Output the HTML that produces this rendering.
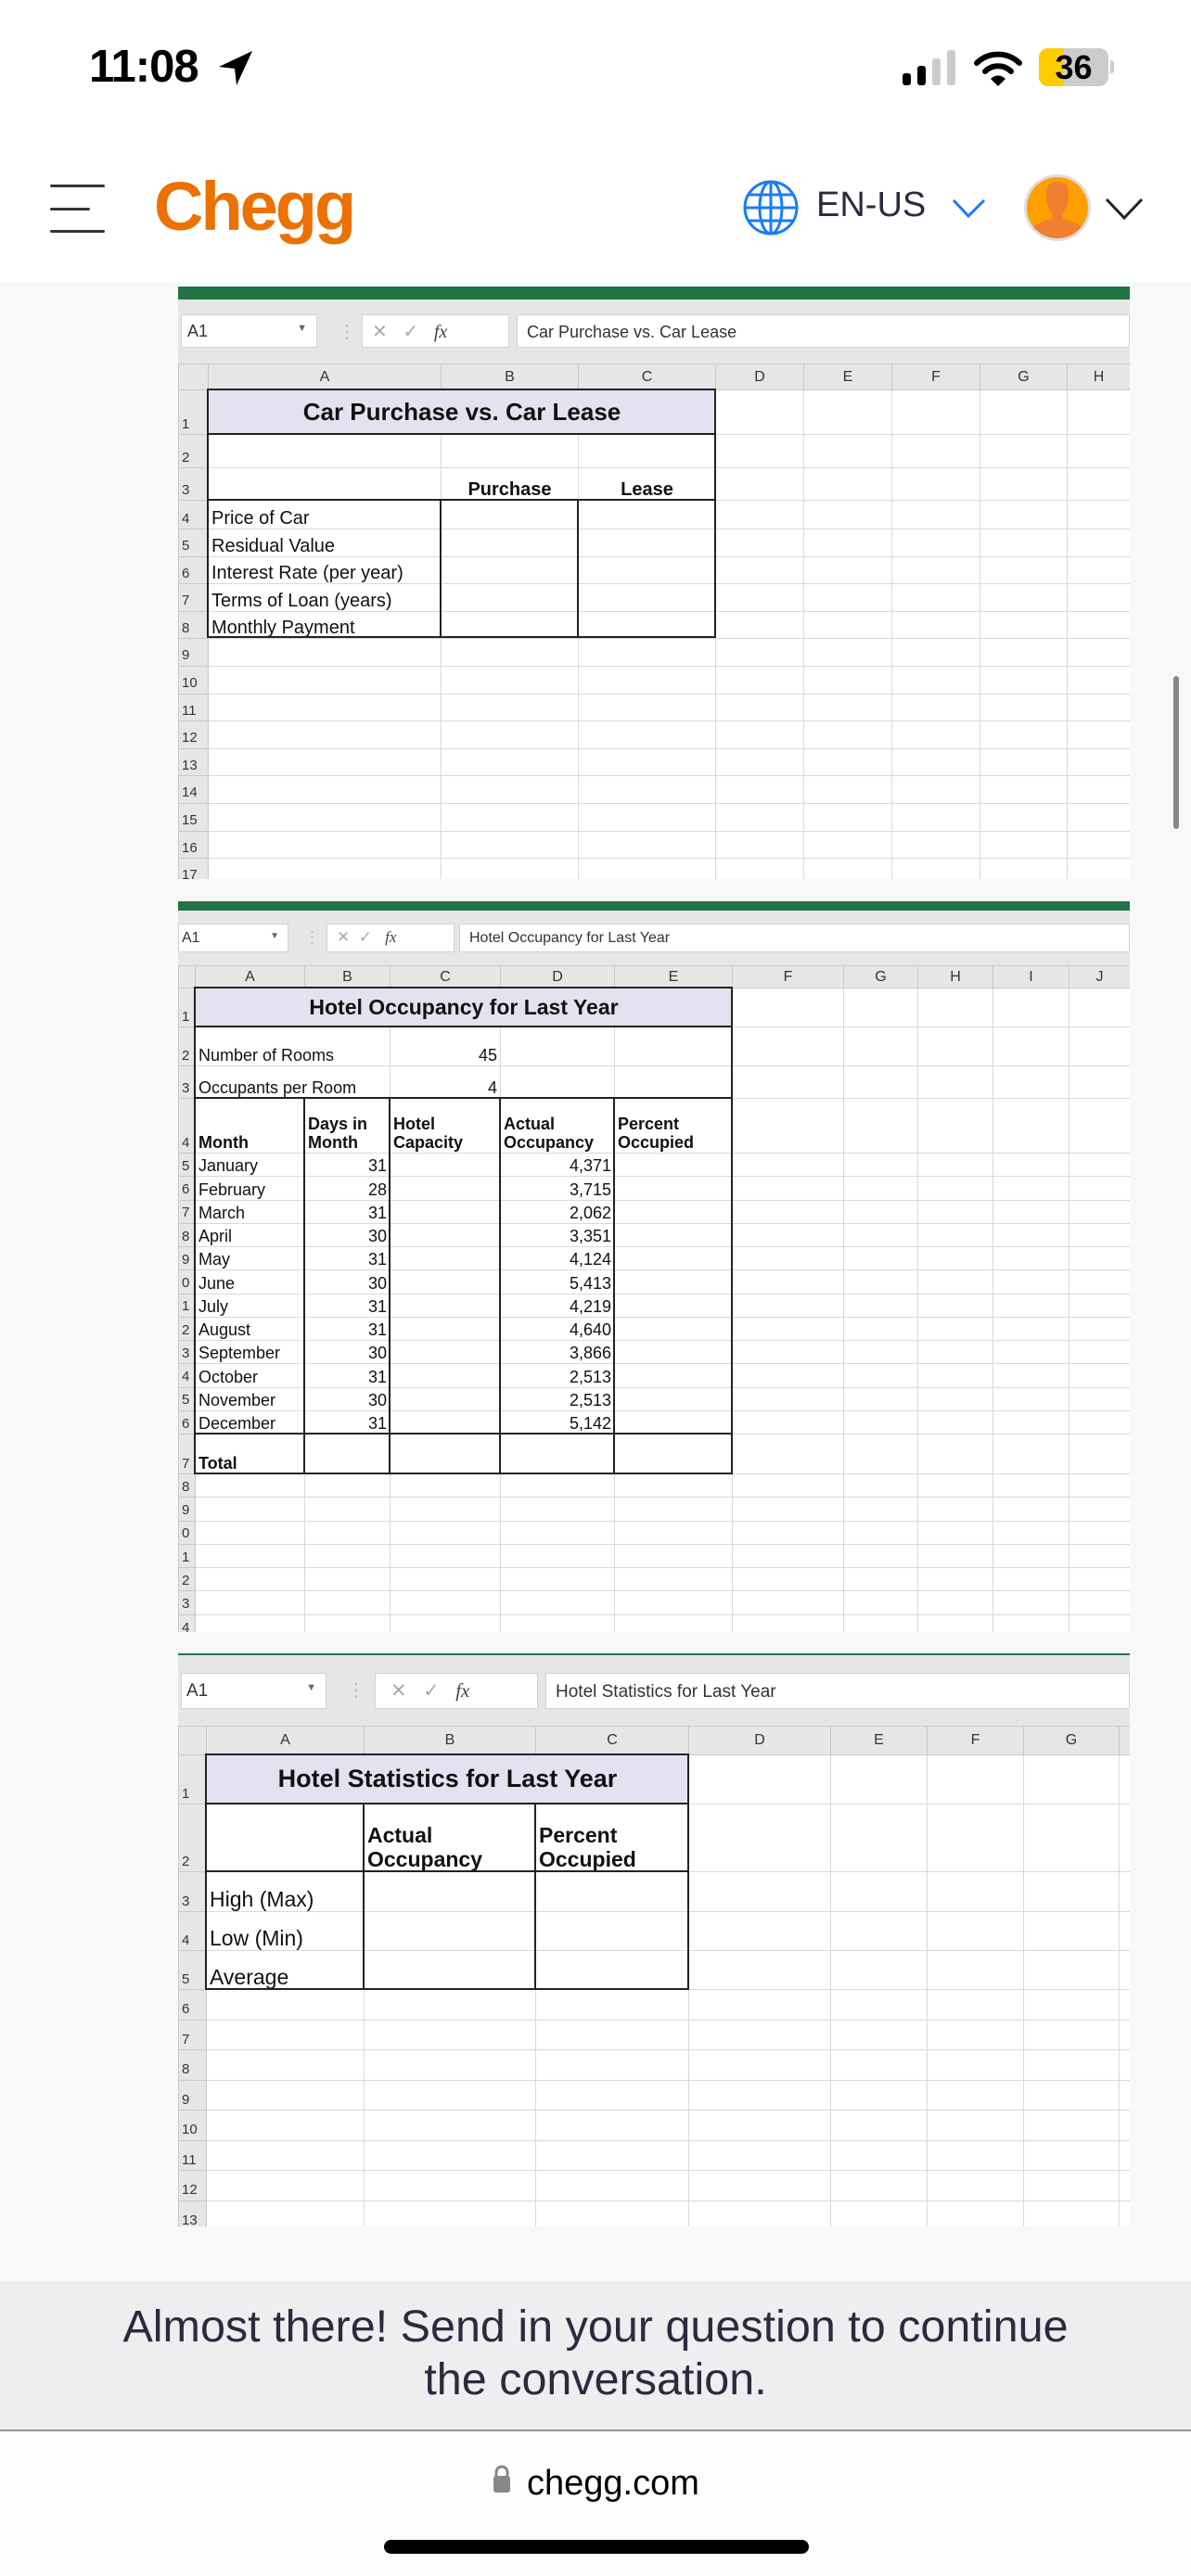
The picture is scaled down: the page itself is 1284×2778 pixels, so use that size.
<!DOCTYPE html>
<html><head><meta charset="utf-8">
<style>
*{margin:0;padding:0;box-sizing:border-box}
body{width:1284px;height:2778px;background:#f8f8f8;position:relative;overflow:hidden;font-family:"Liberation Sans",Arial,sans-serif;color:#111}
.abs{position:absolute}
.hdr{position:absolute;left:0;top:0;width:1284px;height:304px;background:#fff}
table{border-collapse:collapse;table-layout:fixed;position:absolute}
td{border:1px solid #d9d9d9;background:#fff;vertical-align:bottom;white-space:nowrap;overflow:hidden;padding:0 3px;line-height:1.1}
td.rn{background:#e6e6e6;color:#333;border-color:#c8c8c8;font-size:15px;padding:0 0 2px 3px}
tr.ch td{background:#e6e6e6;color:#333;text-align:center;vertical-align:middle;font-size:16px;border-color:#c8c8c8}
.r{text-align:right}.b{font-weight:bold}.c{text-align:center}
.lav{background:#e4e2f0!important}
.tb{position:absolute;background:#e6e6e6}
.box{position:absolute;background:#fff;border:1px solid #d2d2d2;color:#333}
.thk{position:absolute;border:2px solid #222}
.hl{position:absolute;height:2px;background:#222}
.vl{position:absolute;width:2px;background:#222}
</style></head><body>

<div class="hdr"></div>
<!-- status bar -->
<div class="abs" style="left:96px;top:44px;font-size:49px;font-weight:600;letter-spacing:-1px;color:#000">11:08</div>
<svg class="abs" style="left:232px;top:52px" width="44" height="44" viewBox="0 0 44 44"><path d="M40 3 L4 20 L21 22 L23 40 Z" fill="#000"/></svg>
<div class="abs" style="left:973px;top:79px;width:9px;height:13px;background:#000;border-radius:3px"></div>
<div class="abs" style="left:989px;top:71px;width:9px;height:21px;background:#000;border-radius:3px"></div>
<div class="abs" style="left:1005px;top:63px;width:9px;height:29px;background:#ccc;border-radius:3px"></div>
<div class="abs" style="left:1021px;top:54px;width:9px;height:38px;background:#ccc;border-radius:3px"></div>
<svg class="abs" style="left:1049px;top:54px" width="54" height="40" viewBox="0 0 54 40"><path d="M4 14 A33 33 0 0 1 50 14" stroke="#000" stroke-width="6" fill="none" stroke-linecap="round"/><path d="M13 23 A20 20 0 0 1 41 23" stroke="#000" stroke-width="6" fill="none" stroke-linecap="round"/><path d="M19 31 L27 39 L35 31 A11 11 0 0 0 19 31Z" fill="#000"/></svg>
<div class="abs" style="left:1120px;top:52px;width:75px;height:41px;border-radius:10px;background:#ccc;overflow:hidden"><div style="width:27px;height:41px;background:#fc0"></div></div>
<div class="abs" style="left:1197px;top:65px;width:4px;height:14px;background:#ccc;border-radius:0 3px 3px 0"></div>
<div class="abs" style="left:1120px;top:52px;width:75px;height:41px;text-align:center;font-size:36px;font-weight:bold;line-height:41px;color:#000">36</div>

<!-- header -->
<div class="abs" style="left:54px;top:199px;width:59px;height:3px;background:#333;border-radius:2px"></div>
<div class="abs" style="left:54px;top:224px;width:43px;height:3px;background:#333;border-radius:2px"></div>
<div class="abs" style="left:54px;top:248px;width:59px;height:3px;background:#333;border-radius:2px"></div>
<div class="abs" style="left:166px;top:180px;font-size:74px;font-weight:bold;color:#eb7100;letter-spacing:-3px">Chegg</div>
<svg class="abs" style="left:801px;top:194px" width="60" height="60" viewBox="0 0 60 60"><g fill="none" stroke="#1a7cf5" stroke-width="3"><circle cx="30" cy="30" r="28"/><ellipse cx="30" cy="30" rx="12" ry="28"/><line x1="30" y1="2" x2="30" y2="58"/><line x1="2" y1="30" x2="58" y2="30"/><line x1="6" y1="16" x2="54" y2="16"/><line x1="6" y1="44" x2="54" y2="44"/></g></svg>
<div class="abs" style="left:880px;top:200px;font-size:38px;color:#2d2a3e">EN-US</div>
<svg class="abs" style="left:1025px;top:212px" width="40" height="26"><path d="M3 4 L19 21 L36 4" stroke="#1a7cf5" stroke-width="3" fill="none"/></svg>
<svg class="abs" style="left:1102px;top:186px" width="76" height="76" viewBox="0 0 76 76"><defs><clipPath id="cp"><circle cx="38" cy="38" r="33"/></clipPath></defs><circle cx="38" cy="38" r="36" fill="#ddd"/><circle cx="38" cy="38" r="33" fill="#ffa000"/><g clip-path="url(#cp)" fill="#f07f30"><path d="M26 22 Q26 10 38 10 Q50 10 50 22 Q50 38 44 44 L44 50 Q62 54 70 64 L70 80 L6 80 L6 64 Q14 54 32 50 L32 44 Q26 38 26 22Z"/></g></svg>
<svg class="abs" style="left:1190px;top:210px" width="44" height="30"><path d="M3 5 L22 25 L41 5" stroke="#222" stroke-width="3" fill="none"/></svg>
<div class="abs" style="left:1265px;top:729px;width:6px;height:165px;background:#888;border-radius:3px"></div>

<!-- SHEET 1 -->
<div class="abs" style="left:192px;top:309px;width:1026px;height:14px;background:#217346"></div>
<div class="tb" style="left:192px;top:323px;width:1026px;height:69px"></div>
<div class="box" style="left:195px;top:339px;width:147px;height:36px;font-size:18px;padding:7px 6px">A1<span style="position:absolute;right:10px;top:8px;font-size:11px;color:#666">▼</span></div>
<div class="abs" style="left:364px;top:345px;color:#bbb;font-size:20px">⋮</div>
<div class="box" style="left:390px;top:339px;width:159px;height:36px;font-size:20px;padding:5px 10px;color:#aaa">✕ &nbsp;&nbsp;✓ &nbsp;&nbsp;<i style="font-family:'Liberation Serif',serif;color:#444">fx</i></div>
<div class="box" style="left:557px;top:339px;width:661px;height:36px;font-size:18px;padding:8px 10px">Car Purchase vs. Car Lease</div>
<div class="abs" style="left:192px;top:392px;width:1026px;height:556px;overflow:hidden">
<table style="left:0;top:0;width:1026px;font-size:20px">
<colgroup><col style="width:32px"><col style="width:251px"><col style="width:148px"><col style="width:148px"><col style="width:95px"><col style="width:95px"><col style="width:95px"><col style="width:94px"><col style="width:68px"></colgroup>
<tr class="ch" style="height:28px"><td></td><td>A</td><td>B</td><td>C</td><td>D</td><td>E</td><td>F</td><td>G</td><td>H</td></tr>
<tr style="height:48px"><td class="rn">1</td><td colspan="3" class="lav b c" style="font-size:26px;vertical-align:middle">Car Purchase vs. Car Lease</td><td></td><td></td><td></td><td></td><td></td></tr>
<tr style="height:36px"><td class="rn">2</td><td></td><td></td><td></td><td></td><td></td><td></td><td></td><td></td></tr>
<tr style="height:35px"><td class="rn">3</td><td></td><td class="b c">Purchase</td><td class="b c">Lease</td><td></td><td></td><td></td><td></td><td></td></tr>
<tr style="height:31px"><td class="rn">4</td><td>Price of Car</td><td></td><td></td><td></td><td></td><td></td><td></td><td></td></tr>
<tr style="height:29.6px"><td class="rn">5</td><td>Residual Value</td><td></td><td></td><td></td><td></td><td></td><td></td><td></td></tr>
<tr style="height:29.6px"><td class="rn">6</td><td>Interest Rate (per year)</td><td></td><td></td><td></td><td></td><td></td><td></td><td></td></tr>
<tr style="height:29.6px"><td class="rn">7</td><td>Terms of Loan (years)</td><td></td><td></td><td></td><td></td><td></td><td></td><td></td></tr>
<tr style="height:29.6px"><td class="rn">8</td><td>Monthly Payment</td><td></td><td></td><td></td><td></td><td></td><td></td><td></td></tr>
<tr style="height:29.6px"><td class="rn">9</td><td></td><td></td><td></td><td></td><td></td><td></td><td></td><td></td></tr>
<tr style="height:29.6px"><td class="rn">10</td><td></td><td></td><td></td><td></td><td></td><td></td><td></td><td></td></tr>
<tr style="height:29.6px"><td class="rn">11</td><td></td><td></td><td></td><td></td><td></td><td></td><td></td><td></td></tr>
<tr style="height:29.6px"><td class="rn">12</td><td></td><td></td><td></td><td></td><td></td><td></td><td></td><td></td></tr>
<tr style="height:29.6px"><td class="rn">13</td><td></td><td></td><td></td><td></td><td></td><td></td><td></td><td></td></tr>
<tr style="height:29.6px"><td class="rn">14</td><td></td><td></td><td></td><td></td><td></td><td></td><td></td><td></td></tr>
<tr style="height:29.6px"><td class="rn">15</td><td></td><td></td><td></td><td></td><td></td><td></td><td></td><td></td></tr>
<tr style="height:29.6px"><td class="rn">16</td><td></td><td></td><td></td><td></td><td></td><td></td><td></td><td></td></tr>
<tr style="height:29.6px"><td class="rn">17</td><td></td><td></td><td></td><td></td><td></td><td></td><td></td><td></td></tr>
</table></div>
<div class="thk" style="left:223px;top:419px;width:549px;height:269px"></div>
<div class="hl" style="left:223px;top:467px;width:549px"></div>
<div class="hl" style="left:223px;top:538px;width:549px"></div>
<div class="vl" style="left:474px;top:538px;height:150px"></div>
<div class="vl" style="left:622px;top:538px;height:150px"></div>

<!-- SHEET 2 -->
<div class="abs" style="left:192px;top:972px;width:1026px;height:10px;background:#217346"></div>
<div class="tb" style="left:192px;top:982px;width:1026px;height:59px"></div>
<div class="box" style="left:192px;top:996px;width:119px;height:31px;font-size:16px;padding:6px 3px">A1<span style="position:absolute;right:9px;top:7px;font-size:10px;color:#666">▼</span></div>
<div class="abs" style="left:328px;top:1001px;color:#bbb;font-size:17px">⋮</div>
<div class="box" style="left:352px;top:996px;width:138px;height:31px;font-size:17px;padding:4px 10px;color:#aaa">✕ &nbsp;✓ &nbsp;&nbsp;<i style="font-family:'Liberation Serif',serif;color:#444">fx</i></div>
<div class="box" style="left:495px;top:996px;width:723px;height:31px;font-size:16px;padding:6px 10px">Hotel Occupancy for Last Year</div>
<div class="abs" style="left:192px;top:1041px;width:1026px;height:719px;overflow:hidden">
<table style="left:0;top:0;width:1026px;font-size:18px">
<colgroup><col style="width:18px"><col style="width:118px"><col style="width:92px"><col style="width:119px"><col style="width:123px"><col style="width:127px"><col style="width:120px"><col style="width:80px"><col style="width:81px"><col style="width:82px"><col style="width:66px"></colgroup>
<tr class="ch" style="height:24px"><td></td><td>A</td><td>B</td><td>C</td><td>D</td><td>E</td><td>F</td><td>G</td><td>H</td><td>I</td><td>J</td></tr>
<tr style="height:42px"><td class="rn">1</td><td colspan="5" class="lav b c" style="font-size:23px;vertical-align:middle">Hotel Occupancy for Last Year</td><td></td><td></td><td></td><td></td><td></td></tr>
<tr style="height:42px"><td class="rn">2</td><td colspan="2">Number of Rooms</td><td class="r">45</td><td></td><td></td><td></td><td></td><td></td><td></td><td></td></tr>
<tr style="height:35px"><td class="rn">3</td><td colspan="2">Occupants per Room</td><td class="r">4</td><td></td><td></td><td></td><td></td><td></td><td></td><td></td></tr>
<tr style="height:59px" class="b"><td class="rn" style="font-weight:normal">4</td><td>Month</td><td>Days in<br>Month</td><td>Hotel<br>Capacity</td><td>Actual<br>Occupancy</td><td>Percent<br>Occupied</td><td></td><td></td><td></td><td></td><td></td></tr>
<tr style="height:25.25px"><td class="rn">5</td><td>January</td><td class="r">31</td><td></td><td class="r">4,371</td><td></td><td></td><td></td><td></td><td></td><td></td></tr>
<tr style="height:25.25px"><td class="rn">6</td><td>February</td><td class="r">28</td><td></td><td class="r">3,715</td><td></td><td></td><td></td><td></td><td></td><td></td></tr>
<tr style="height:25.25px"><td class="rn">7</td><td>March</td><td class="r">31</td><td></td><td class="r">2,062</td><td></td><td></td><td></td><td></td><td></td><td></td></tr>
<tr style="height:25.25px"><td class="rn">8</td><td>April</td><td class="r">30</td><td></td><td class="r">3,351</td><td></td><td></td><td></td><td></td><td></td><td></td></tr>
<tr style="height:25.25px"><td class="rn">9</td><td>May</td><td class="r">31</td><td></td><td class="r">4,124</td><td></td><td></td><td></td><td></td><td></td><td></td></tr>
<tr style="height:25.25px"><td class="rn">0</td><td>June</td><td class="r">30</td><td></td><td class="r">5,413</td><td></td><td></td><td></td><td></td><td></td><td></td></tr>
<tr style="height:25.25px"><td class="rn">1</td><td>July</td><td class="r">31</td><td></td><td class="r">4,219</td><td></td><td></td><td></td><td></td><td></td><td></td></tr>
<tr style="height:25.25px"><td class="rn">2</td><td>August</td><td class="r">31</td><td></td><td class="r">4,640</td><td></td><td></td><td></td><td></td><td></td><td></td></tr>
<tr style="height:25.25px"><td class="rn">3</td><td>September</td><td class="r">30</td><td></td><td class="r">3,866</td><td></td><td></td><td></td><td></td><td></td><td></td></tr>
<tr style="height:25.25px"><td class="rn">4</td><td>October</td><td class="r">31</td><td></td><td class="r">2,513</td><td></td><td></td><td></td><td></td><td></td><td></td></tr>
<tr style="height:25.25px"><td class="rn">5</td><td>November</td><td class="r">30</td><td></td><td class="r">2,513</td><td></td><td></td><td></td><td></td><td></td><td></td></tr>
<tr style="height:25.25px"><td class="rn">6</td><td>December</td><td class="r">31</td><td></td><td class="r">5,142</td><td></td><td></td><td></td><td></td><td></td><td></td></tr>
<tr style="height:43px"><td class="rn">7</td><td class="b">Total</td><td></td><td></td><td></td><td></td><td></td><td></td><td></td><td></td><td></td></tr>
<tr style="height:25.3px"><td class="rn">8</td><td></td><td></td><td></td><td></td><td></td><td></td><td></td><td></td><td></td><td></td></tr>
<tr style="height:25.3px"><td class="rn">9</td><td></td><td></td><td></td><td></td><td></td><td></td><td></td><td></td><td></td><td></td></tr>
<tr style="height:25.3px"><td class="rn">0</td><td></td><td></td><td></td><td></td><td></td><td></td><td></td><td></td><td></td><td></td></tr>
<tr style="height:25.3px"><td class="rn">1</td><td></td><td></td><td></td><td></td><td></td><td></td><td></td><td></td><td></td><td></td></tr>
<tr style="height:25.3px"><td class="rn">2</td><td></td><td></td><td></td><td></td><td></td><td></td><td></td><td></td><td></td><td></td></tr>
<tr style="height:25.3px"><td class="rn">3</td><td></td><td></td><td></td><td></td><td></td><td></td><td></td><td></td><td></td><td></td></tr>
<tr style="height:25.3px"><td class="rn">4</td><td></td><td></td><td></td><td></td><td></td><td></td><td></td><td></td><td></td><td></td></tr>
</table></div>
<div class="thk" style="left:209px;top:1064px;width:581px;height:526px"></div>
<div class="hl" style="left:209px;top:1106px;width:581px"></div>
<div class="hl" style="left:209px;top:1183px;width:581px"></div>
<div class="hl" style="left:209px;top:1545px;width:581px"></div>
<div class="vl" style="left:327px;top:1183px;height:407px"></div>
<div class="vl" style="left:419px;top:1183px;height:407px"></div>
<div class="vl" style="left:538px;top:1183px;height:407px"></div>
<div class="vl" style="left:661px;top:1183px;height:407px"></div>

<!-- SHEET 3 -->
<div class="abs" style="left:192px;top:1783px;width:1026px;height:2px;background:#217346"></div>
<div class="tb" style="left:192px;top:1785px;width:1026px;height:76px"></div>
<div class="box" style="left:195px;top:1804px;width:157px;height:39px;font-size:19px;padding:8px 5px">A1<span style="position:absolute;right:10px;top:9px;font-size:11px;color:#666">▼</span></div>
<div class="abs" style="left:374px;top:1810px;color:#bbb;font-size:20px">⋮</div>
<div class="box" style="left:404px;top:1804px;width:176px;height:39px;font-size:21px;padding:6px 16px;color:#aaa">✕ &nbsp;&nbsp;✓ &nbsp;&nbsp;<i style="font-family:'Liberation Serif',serif;color:#444">fx</i></div>
<div class="box" style="left:588px;top:1804px;width:630px;height:39px;font-size:19px;padding:9px 10px">Hotel Statistics for Last Year</div>
<div class="abs" style="left:192px;top:1861px;width:1026px;height:540px;overflow:hidden">
<table style="left:0;top:0;width:1026px;font-size:23px">
<colgroup><col style="width:30px"><col style="width:170px"><col style="width:185px"><col style="width:165px"><col style="width:153px"><col style="width:104px"><col style="width:104px"><col style="width:103px"><col style="width:12px"></colgroup>
<tr class="ch" style="height:31px"><td></td><td>A</td><td>B</td><td>C</td><td>D</td><td>E</td><td>F</td><td>G</td><td></td></tr>
<tr style="height:53px"><td class="rn">1</td><td colspan="3" class="lav b c" style="font-size:27px;vertical-align:middle">Hotel Statistics for Last Year</td><td></td><td></td><td></td><td></td><td></td></tr>
<tr style="height:73px" class="b"><td class="rn" style="font-weight:normal">2</td><td></td><td>Actual<br>Occupancy</td><td>Percent<br>Occupied</td><td></td><td></td><td></td><td></td><td></td></tr>
<tr style="height:43px"><td class="rn">3</td><td>High (Max)</td><td></td><td></td><td></td><td></td><td></td><td></td><td></td></tr>
<tr style="height:42px"><td class="rn">4</td><td>Low (Min)</td><td></td><td></td><td></td><td></td><td></td><td></td><td></td></tr>
<tr style="height:42px"><td class="rn">5</td><td>Average</td><td></td><td></td><td></td><td></td><td></td><td></td><td></td></tr>
<tr style="height:32.5px"><td class="rn">6</td><td></td><td></td><td></td><td></td><td></td><td></td><td></td><td></td></tr>
<tr style="height:32.5px"><td class="rn">7</td><td></td><td></td><td></td><td></td><td></td><td></td><td></td><td></td></tr>
<tr style="height:32.5px"><td class="rn">8</td><td></td><td></td><td></td><td></td><td></td><td></td><td></td><td></td></tr>
<tr style="height:32.5px"><td class="rn">9</td><td></td><td></td><td></td><td></td><td></td><td></td><td></td><td></td></tr>
<tr style="height:32.5px"><td class="rn">10</td><td></td><td></td><td></td><td></td><td></td><td></td><td></td><td></td></tr>
<tr style="height:32.5px"><td class="rn">11</td><td></td><td></td><td></td><td></td><td></td><td></td><td></td><td></td></tr>
<tr style="height:32.5px"><td class="rn">12</td><td></td><td></td><td></td><td></td><td></td><td></td><td></td><td></td></tr>
<tr style="height:32.5px"><td class="rn">13</td><td></td><td></td><td></td><td></td><td></td><td></td><td></td><td></td></tr>
</table></div>
<div class="thk" style="left:221px;top:1891px;width:522px;height:255px"></div>
<div class="hl" style="left:221px;top:1944px;width:522px"></div>
<div class="hl" style="left:221px;top:2017px;width:522px"></div>
<div class="vl" style="left:391px;top:1944px;height:202px"></div>
<div class="vl" style="left:576px;top:1944px;height:202px"></div>

<!-- banner -->
<div class="abs" style="left:0;top:2460px;width:1284px;height:162px;background:#eeeef0;border-bottom:2px solid #999"></div>
<div class="abs" style="left:0;top:2481px;width:1284px;text-align:center;font-size:48.5px;line-height:57px;color:#2d2a3e">Almost there! Send in your question to continue<br>the conversation.</div>
<div class="abs" style="left:0;top:2624px;width:1284px;height:154px;background:#fdfdfd"></div>
<svg class="abs" style="left:530px;top:2657px" width="22" height="32"><path d="M5 14 V9 A6 6 0 0 1 17 9 V14" stroke="#888" stroke-width="3" fill="none"/><rect x="2" y="13" width="18" height="18" rx="3" fill="#888"/></svg>
<div class="abs" style="left:568px;top:2657px;font-size:38px;color:#000">chegg.com</div>
<div class="abs" style="left:414px;top:2739px;width:458px;height:15px;background:#000;border-radius:8px"></div>
</body></html>
